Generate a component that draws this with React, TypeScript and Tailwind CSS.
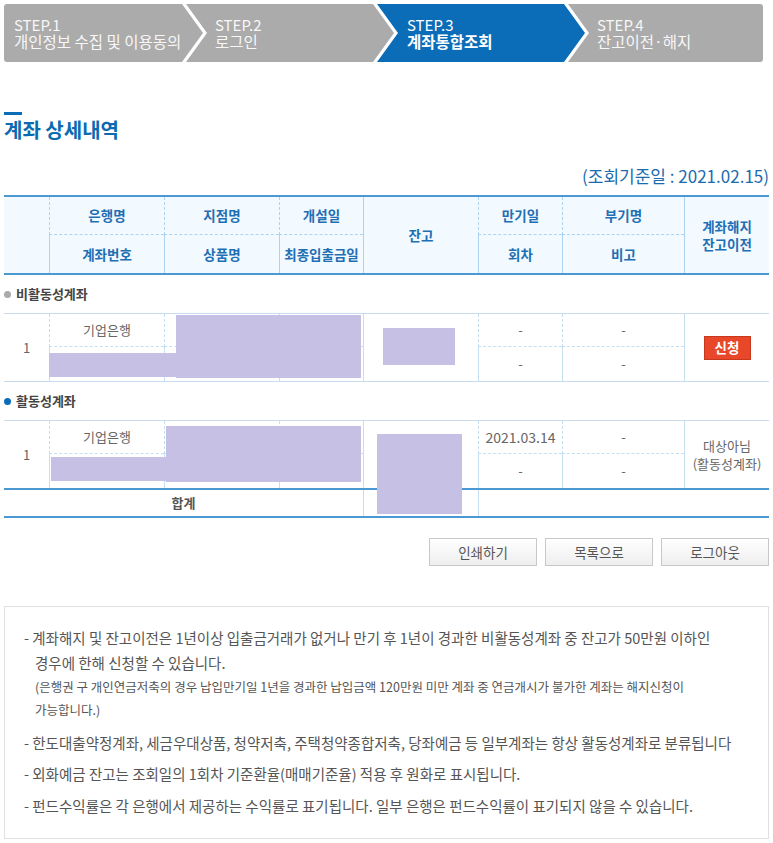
import React from "react";

const Redact = ({ l, t, w, h }: { l: number; t: number; w: number; h: number }) => (
  <div
    className="absolute bg-[#c6c0e4]"
    style={{ left: l, top: t, width: w, height: h }}
  />
);

function Steps() {
  return (
    <div className="flex h-[58px] w-[759px] text-[15px] leading-[17px] text-[#f7f7f7]">
      <div className="flex w-[199px] shrink-0 flex-col items-start justify-center rounded-l-[3px] bg-[#ababab] pl-[10px] [clip-path:polygon(0_0,178px_0,199px_50%,178px_100%,0_100%)]">
        <span>STEP.1</span>
        <span className="text-[15.5px]">개인정보 수집 및 이용동의</span>
      </div>
      <div className="ml-[-17px] flex w-[208px] shrink-0 flex-col items-start justify-center bg-[#ababab] pl-[29px] [clip-path:polygon(0_0,187px_0,208px_50%,187px_100%,0_100%,21px_50%)]">
        <span>STEP.2</span>
        <span className="text-[15.5px]">로그인</span>
      </div>
      <div className="ml-[-17px] flex w-[208px] shrink-0 flex-col items-start justify-center bg-[#0b6db8] pl-[30px] text-white [clip-path:polygon(0_0,187px_0,208px_50%,187px_100%,0_100%,21px_50%)]">
        <span>STEP.3</span>
        <span className="text-[15.5px] font-bold">계좌통합조회</span>
      </div>
      <div className="ml-[-17px] flex w-[195px] shrink-0 flex-col items-start justify-center rounded-r-[3px] bg-[#ababab] pl-[29px] [clip-path:polygon(0_0,100%_0,100%_100%,0_100%,21px_50%)]">
        <span>STEP.4</span>
        <span className="text-[15.5px]">잔고이전·해지</span>
      </div>
    </div>
  );
}

const cols = "grid grid-cols-[45px_115px_115px_84px_115px_84px_122px_85px]";

function Header() {
  const th = "flex items-center justify-center border-l border-[#acd4f2] text-center";
  const top = "border-b border-dashed border-[#a3c8e4]";
  return (
    <div
      className={`${cols} grid-rows-[38px_38px] border-t-2 border-b-2 border-[#4b98d2] bg-[#f2f9ff] text-[13.5px] font-semibold text-[#1f6fb4]`}
    >
      <div className="row-span-2" />
      <div className={`${th} ${top} col-start-2 row-start-1`}>은행명</div>
      <div className={`${th} col-start-2 row-start-2`}>계좌번호</div>
      <div className={`${th} ${top} col-start-3 row-start-1`}>지점명</div>
      <div className={`${th} col-start-3 row-start-2`}>상품명</div>
      <div className={`${th} ${top} col-start-4 row-start-1`}>개설일</div>
      <div className={`${th} col-start-4 row-start-2`}>최종입출금일</div>
      <div className={`${th} col-start-5 row-span-2 row-start-1`}>잔고</div>
      <div className={`${th} ${top} col-start-6 row-start-1`}>만기일</div>
      <div className={`${th} col-start-6 row-start-2`}>회차</div>
      <div className={`${th} ${top} col-start-7 row-start-1`}>부기명</div>
      <div className={`${th} col-start-7 row-start-2`}>비고</div>
      <div className={`${th} col-start-8 row-span-2 row-start-1 flex-col leading-[18px]`}>
        <span>계좌해지</span>
        <span>잔고이전</span>
      </div>
    </div>
  );
}

function SectionLabel({ active, children }: { active?: boolean; children: React.ReactNode }) {
  return (
    <div className="flex h-[38px] items-center gap-[5px] text-[13px] font-semibold text-[#444]">
      <span className={`h-[7px] w-[7px] rounded-full ${active ? "bg-[#0b6db8]" : "bg-[#aaaaaa]"}`} />
      <span>{children}</span>
    </div>
  );
}

function BodyRow({
  mat,
  mat2,
  last,
  bottom,
  blocks,
}: {
  mat: React.ReactNode;
  mat2: string;
  last: React.ReactNode;
  bottom?: boolean;
  blocks: { l: number; t: number; w: number; h: number }[];
}) {
  const td = "flex items-center justify-center border-l border-[#c5dff2]";
  const top = "border-b border-dashed border-[#a7cbe5]";
  return (
    <div
      className={`${cols} relative grid-rows-[33px_34px] border-t border-[#c9dced] text-[13px] text-[#666] ${
        bottom ? "" : "border-b"
      }`}
    >
      <div className="col-start-1 row-span-2 row-start-1 flex items-center justify-center">1</div>
      <div className={`${td} ${top} col-start-2 row-start-1`}>기업은행</div>
      <div className={`${td} col-start-2 row-start-2`} />
      <div className={`${td} ${top} col-start-3 row-start-1`} />
      <div className={`${td} col-start-3 row-start-2`} />
      <div className={`${td} ${top} col-start-4 row-start-1`} />
      <div className={`${td} col-start-4 row-start-2`} />
      <div className={`${td} col-start-5 row-span-2 row-start-1`} />
      <div className={`${td} ${top} col-start-6 row-start-1`}>{mat}</div>
      <div className={`${td} col-start-6 row-start-2`}>-</div>
      <div className={`${td} ${top} col-start-7 row-start-1`}>{mat2}</div>
      <div className={`${td} col-start-7 row-start-2`}>-</div>
      <div className={`${td} col-start-8 row-span-2 row-start-1`}>{last}</div>
      {blocks.map((b, i) => (
        <Redact key={i} {...b} />
      ))}
    </div>
  );
}

export default function App() {
  return (
    <div className="w-[773px] bg-white px-[4px] pt-[4px] pb-[4px] font-['Noto_Sans_CJK_KR',sans-serif]">
      <Steps />

      <div className="mt-[50px] h-[3px] w-[18px] bg-[#0b6db8]" />
      <h1 className="mt-[3px] text-[20px] leading-[24px] font-bold text-[#0c6ab0]">계좌 상세내역</h1>

      <div className="mt-[22px] text-right text-[17px] leading-[24px] text-[#1b6bb0]">
        (조회기준일 : 2021.02.15)
      </div>

      <div className="mt-[7px]">
        <Header />
        <SectionLabel>비활동성계좌</SectionLabel>
        <BodyRow
          mat="-"
          mat2="-"
          last={
            <span className="flex h-[24px] w-[47px] items-center justify-center border border-[#c8381d] bg-[#e8472a] text-[13.5px] font-semibold text-white">
              신청
            </span>
          }
          blocks={[
            { l: 45, t: 39, w: 127, h: 24 },
            { l: 172, t: 1, w: 185, h: 63 },
            { l: 379, t: 14, w: 72, h: 37 },
          ]}
        />
        <SectionLabel active>활동성계좌</SectionLabel>
        <BodyRow
          mat={<span className="text-[14px]">2021.03.14</span>}
          mat2="-"
          bottom
          last={
            <span className="flex flex-col items-center text-[13px] leading-[18px]">
              <span>대상아님</span>
              <span>(활동성계좌)</span>
            </span>
          }
          blocks={[
            { l: 47, t: 36, w: 115, h: 24 },
            { l: 162, t: 5, w: 195, h: 56 },
            { l: 373, t: 13, w: 85, h: 80 },
          ]}
        />
        <div className="grid h-[30px] grid-cols-[359px_115px_291px] border-t-2 border-b-2 border-[#4b98d2] text-[13px] font-semibold text-[#555]">
          <div className="flex items-center justify-center">합계</div>
          <div className="border-l border-[#c5dff2]" />
          <div className="border-l border-[#c5dff2]" />
        </div>
      </div>

      <div className="mt-[20px] flex justify-end gap-[8px]">
        {["인쇄하기", "목록으로", "로그아웃"].map((t) => (
          <button
            key={t}
            className="flex h-[28px] w-[108px] items-center justify-center border border-[#c8c8c8] bg-linear-to-b from-white to-[#eeeeee] text-[13.5px] text-[#555]"
          >
            {t}
          </button>
        ))}
      </div>

      <div className="mt-[40px] border border-[#e0e0e0] pt-[18px] pb-[20px] pl-[19px] text-[14.5px] text-[#555]">
        <div className="pl-[11px] indent-[-11px] leading-[25px] whitespace-nowrap">
          - 계좌해지 및 잔고이전은 1년이상 입출금거래가 없거나 만기 후 1년이 경과한 비활동성계좌 중 잔고가 50만원 이하인
          <br />
          경우에 한해 신청할 수 있습니다.
        </div>
        <div className="pl-[11px] text-[12.5px] leading-[23px] whitespace-nowrap">
          (은행권 구 개인연금저축의 경우 납입만기일 1년을 경과한 납입금액 120만원 미만 계좌 중 연금개시가 불가한 계좌는 해지신청이
          <br />
          가능합니다.)
        </div>
        <div className="mt-[9px] leading-[25px] whitespace-nowrap">
          - 한도대출약정계좌, 세금우대상품, 청약저축, 주택청약종합저축, 당좌예금 등 일부계좌는 항상 활동성계좌로 분류됩니다
        </div>
        <div className="mt-[6px] leading-[25px] whitespace-nowrap">
          - 외화예금 잔고는 조회일의 1회차 기준환율(매매기준율) 적용 후 원화로 표시됩니다.
        </div>
        <div className="mt-[7px] leading-[25px] whitespace-nowrap">
          - 펀드수익률은 각 은행에서 제공하는 수익률로 표기됩니다. 일부 은행은 펀드수익률이 표기되지 않을 수 있습니다.
        </div>
      </div>
    </div>
  );
}
